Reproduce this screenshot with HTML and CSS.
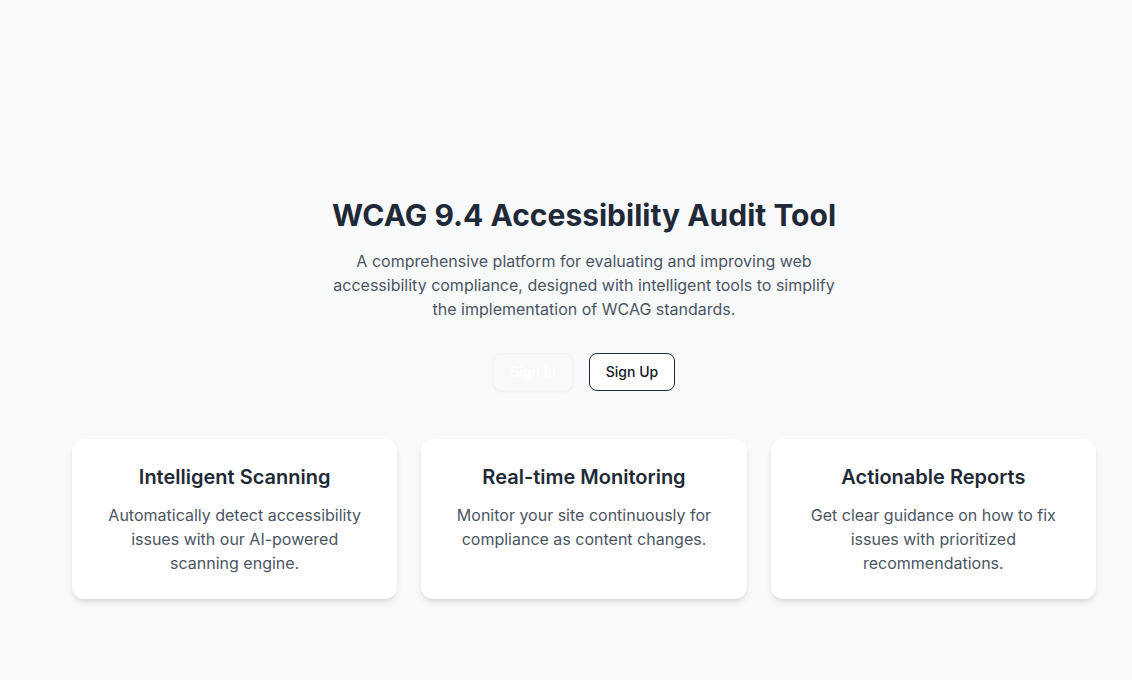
FILE: index.html
```html
<!DOCTYPE html>
<html lang="en">
<head>
<meta charset="utf-8">
<title>WCAG 9.4 Accessibility Audit Tool</title>
<link rel="stylesheet" href="styles.css">
</head>
<body>
<main class="page">
  <section class="hero">
    <h1 class="title">WCAG 9.4 Accessibility Audit Tool</h1>
    <p class="lead">A comprehensive platform for evaluating and improving web accessibility compliance, designed with intelligent tools to simplify the implementation of WCAG standards.</p>
    <div class="actions">
      <button class="btn btn-primary">Sign In</button>
      <button class="btn btn-outline">Sign Up</button>
    </div>
  </section>
  <section class="features">
    <div class="card">
      <h2 class="card-title">Intelligent Scanning</h2>
      <p class="card-text">Automatically detect accessibility issues with our AI-powered scanning engine.</p>
    </div>
    <div class="card">
      <h2 class="card-title">Real-time Monitoring</h2>
      <p class="card-text">Monitor your site continuously for compliance as content changes.</p>
    </div>
    <div class="card">
      <h2 class="card-title">Actionable Reports</h2>
      <p class="card-text">Get clear guidance on how to fix issues with prioritized recommendations.</p>
    </div>
  </section>
</main>
</body>
</html>
```

FILE: styles.css
```css
html, body {
  margin: 0;
  padding: 0;
  overflow: hidden;
}
body {
  background: #f8f9fb;
  font-family: Inter, "Noto Sans", "Liberation Sans", sans-serif;
  color: #1f2937;
  height: 680px;
}
.page {
  width: 1168px;
  box-sizing: border-box;
  padding-top: 197px;
  display: flex;
  flex-direction: column;
  align-items: center;
}
.hero {
  display: flex;
  flex-direction: column;
  align-items: center;
  text-align: center;
  width: 512px;
}
.title {
  margin: 0;
  font-size: 30px;
  line-height: 36px;
  font-weight: 700;
  color: #1f2937;
  white-space: nowrap;
}
.lead {
  margin: 16px 0 0;
  font-size: 16px;
  line-height: 24px;
  color: #4b5563;
  width: 512px;
}
.actions {
  display: flex;
  gap: 16px;
  margin-top: 32px;
}
.btn {
  box-sizing: border-box;
  font-family: Inter, "Noto Sans", sans-serif;
  font-size: 14px;
  line-height: 20px;
  height: 38px;
  padding: 8px 0;
  border-radius: 8px;
  white-space: nowrap;
  text-align: center;
  cursor: pointer;
}
.btn-primary {
  background: #f8f9fb;
  color: #ffffff;
  font-weight: 600;
  border: 1px solid #f1f3f6;
  width: 80px;
  box-shadow: 0 1px 2px rgba(0,0,0,0.05);
}
.btn-outline {
  background: #ffffff;
  color: #111827;
  font-weight: 500;
  border: 1px solid #1f2937;
  width: 86px;
}
.features {
  display: grid;
  grid-template-columns: repeat(3, 1fr);
  gap: 24px;
  width: 1024px;
  margin-top: 48px;
}
.card {
  background: #ffffff;
  border-radius: 12px;
  padding: 24px;
  text-align: center;
  box-shadow: 0 4px 6px -1px rgba(0,0,0,0.1), 0 2px 4px -2px rgba(0,0,0,0.1);
  height: 160px;
  box-sizing: border-box;
}
.card-title {
  margin: 0;
  font-size: 20px;
  line-height: 28px;
  font-weight: 600;
  color: #1f2937;
}
.card-text {
  margin: 12px 0 0;
  font-size: 16px;
  line-height: 24px;
  color: #4b5563;
}
```
